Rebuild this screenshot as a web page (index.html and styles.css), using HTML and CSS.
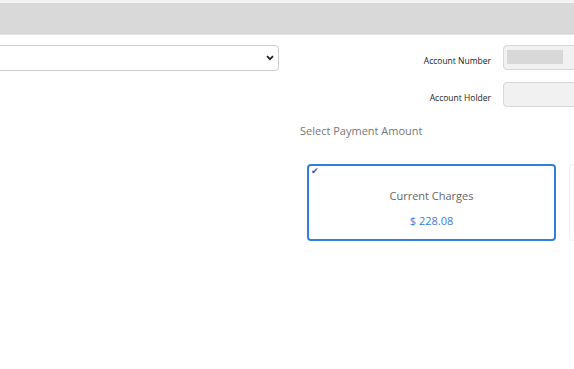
FILE: index.html
```html
<!DOCTYPE html>
<html>
<head>
<meta charset="utf-8">
<link rel="stylesheet" href="styles.css">
</head>
<body>
<div class="topstrip"><div class="topbar"></div></div>
<div class="main">
  <div class="left">
    <div class="select">
      <svg class="chev" width="8" height="6" viewBox="0 0 8 6"><path d="M1 1.2 L4 4.2 L7 1.2" fill="none" stroke="#222" stroke-width="1.8"/></svg>
    </div>
  </div>
  <div class="right">
    <div class="field">
      <span class="label">Account Number</span>
      <div class="input"><div class="masked"></div></div>
    </div>
    <div class="field">
      <span class="label">Account Holder</span>
      <div class="input"></div>
    </div>
    <div class="section-title">Select Payment Amount</div>
    <div class="cards">
      <div class="card selected">
        <span class="check">&#10004;</span>
        <div class="card-title">Current Charges</div>
        <div class="card-amount">$ 228.08</div>
      </div>
      <div class="card"></div>
    </div>
  </div>
</div>
</body>
</html>
```

FILE: styles.css
```css
html, body {
  margin: 0;
  padding: 0;
  background: #fff;
  overflow: hidden;
  width: 574px;
  height: 369px;
  font-family: "Open Sans", "Liberation Sans", sans-serif;
}
.topstrip {
  background: #f3f3f6;
  padding-top: 3px;
}
.topbar {
  height: 31px;
  background: #d9d9d9;
  border-bottom: 1px solid #e4e4e4;
}
.main {
  display: flex;
  padding-top: 10px;
}
.left {
  width: 300px;
  flex: none;
}
.select {
  margin-left: -21px;
  width: 294px;
  height: 24px;
  border: 1px solid #cdcdcd;
  border-radius: 4px;
  display: flex;
  align-items: center;
  justify-content: flex-end;
  padding-right: 4px;
  box-sizing: content-box;
}
.chev { display: block; }
.right {
  flex: none;
  width: 274px;
  display: flex;
  flex-direction: column;
}
.field {
  display: flex;
  align-items: center;
  gap: 12px;
  margin-bottom: 12px;
}
.label {
  width: 191px;
  flex: none;
  text-align: right;
  font-size: 8.5px;
  color: #222;
  margin-top: 5px;
}
.input {
  width: 100px;
  flex: none;
  height: 25px;
  box-sizing: border-box;
  border: 1px solid #d6d6d6;
  border-radius: 4px;
  background: #f1f1f1;
  padding: 4px 0 0 3px;
}
.masked {
  width: 56px;
  height: 14px;
  background: #d8d8d8;
}
.section-title {
  margin-top: 4px;
  font-size: 11px;
  line-height: 15px;
  color: #777;
}
.cards {
  display: flex;
  gap: 13px;
  margin-top: 26px;
  margin-left: 7px;
}
.card {
  position: relative;
  flex: none;
  width: 249px;
  height: 77px;
  box-sizing: border-box;
  border: 1px solid #eeeeee;
  border-radius: 4px;
  text-align: center;
}
.card.selected {
  border: 2px solid #2f7fe0;
}
.check {
  position: absolute;
  left: 2px;
  top: 0px;
  font-size: 9px;
  line-height: 10px;
  color: #1f5fbf;
}
.card-title {
  margin-top: 22px;
  font-size: 11px;
  line-height: 15px;
  color: #666;
}
.card-amount {
  margin-top: 10px;
  font-size: 11px;
  line-height: 15px;
  color: #3a7be0;
}
```
